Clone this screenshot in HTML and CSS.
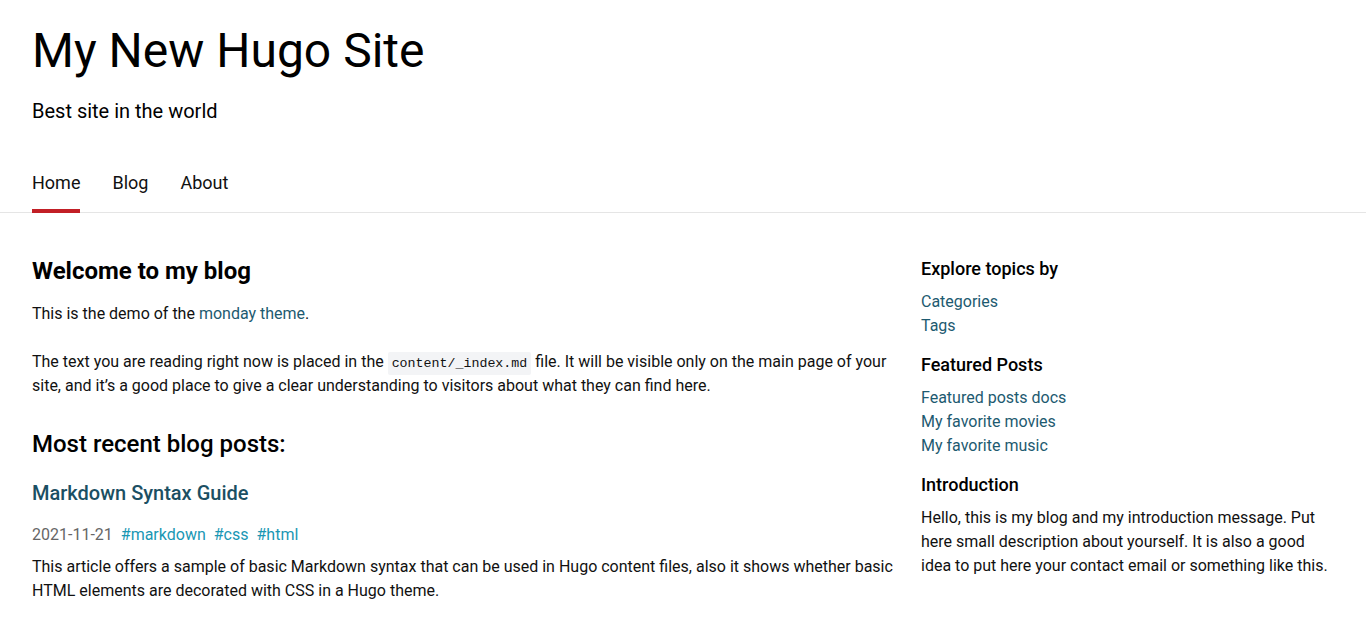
FILE: index.html
```html
<!DOCTYPE html>
<html lang="en">
<head>
<meta charset="utf-8">
<title>My New Hugo Site</title>
<link rel="stylesheet" href="styles.css">
</head>
<body>
<header class="site-header">
  <div class="brand">
    <h1 class="site-title">My New Hugo Site</h1>
    <p class="site-desc">Best site in the world</p>
  </div>
  <nav class="nav">
    <a class="nav-item active" href="#">Home</a>
    <a class="nav-item" href="#">Blog</a>
    <a class="nav-item" href="#">About</a>
  </nav>
</header>
<div class="page">
  <main class="content">
    <h2 class="h2">Welcome to my blog</h2>
    <p class="para">This is the demo of the <a class="link" href="#">monday theme</a>.</p>
    <p class="para">The text you are reading right now is placed in the <code class="code">content/_index.md</code> file. It will be visible only on the main page of your site, and it’s a good place to give a clear understanding to visitors about what they can find here.</p>
    <h2 class="h2 recent">Most recent blog posts:</h2>
    <article class="post">
      <h3 class="post-title"><a class="post-link" href="#">Markdown Syntax Guide</a></h3>
      <div class="meta"><span class="date">2021-11-21</span><a class="tag" href="#">#markdown</a><a class="tag" href="#">#css</a><a class="tag" href="#">#html</a></div>
      <p class="summary">This article offers a sample of basic Markdown syntax that can be used in Hugo content files, also it shows whether basic HTML elements are decorated with CSS in a Hugo theme.</p>
    </article>
  </main>
  <aside class="sidebar">
    <section class="widget">
      <h4 class="widget-title">Explore topics by</h4>
      <ul class="list">
        <li><a class="link" href="#">Categories</a></li>
        <li><a class="link" href="#">Tags</a></li>
      </ul>
    </section>
    <section class="widget">
      <h4 class="widget-title">Featured Posts</h4>
      <ul class="list">
        <li><a class="link" href="#">Featured posts docs</a></li>
        <li><a class="link" href="#">My favorite movies</a></li>
        <li><a class="link" href="#">My favorite music</a></li>
      </ul>
    </section>
    <section class="widget">
      <h4 class="widget-title">Introduction</h4>
      <p class="intro">Hello, this is my blog and my introduction message. Put here small description about yourself. It is also a good idea to put here your contact email or something like this.</p>
    </section>
  </aside>
</div>
</body>
</html>
```
FILE: styles.css
```css
* { box-sizing: border-box; }
html, body { margin: 0; padding: 0; }
body {
  font-family: Roboto, "Liberation Sans", sans-serif;
  color: #111;
  background: #fff;
  font-size: 16px;
  line-height: 1.5;
}
a { text-decoration: none; }

.site-header {
  border-bottom: 1px solid #e5e5e5;
}
.brand {
  padding: 20px 32px 0;
}
.site-title {
  margin: 0;
  font-size: 48px;
  font-weight: 400;
  line-height: 62px;
  color: #000;
}
.site-desc {
  margin: 15px 0 0;
  font-size: 20px;
  line-height: 28px;
  color: #000;
}
.nav {
  display: flex;
  gap: 32px;
  padding: 46px 32px 0;
}
.nav-item {
  display: block;
  color: #111;
  font-size: 18px;
  line-height: 24px;
  padding-bottom: 14px;
  border-bottom: 4px solid transparent;
  margin-bottom: -1px;
}
.nav-item.active {
  border-bottom-color: #c21f26;
}

.page {
  display: grid;
  grid-template-columns: 1fr 413px;
  gap: 20px;
  padding: 0 32px;
}
.content { padding-top: 40px; }
.h2 {
  margin: 0 0 13px;
  font-size: 24px;
  font-weight: 700;
  line-height: 36px;
  color: #000;
}
.h2.recent { margin: 28px 0 16px; font-weight: 500; }
.para {
  margin: 0 0 24px;
  font-size: 16px;
  line-height: 24px;
}
.link { color: #1d5a70; }
.code {
  font-family: "Liberation Mono", "DejaVu Sans Mono", monospace;
  font-size: 13.3px;
  line-height: 17px;
  background: #f3f4f6;
  padding: 4px 4px;
  border-radius: 2px;
}
.post-title {
  margin: 0 0 15px;
  font-size: 20px;
  font-weight: 500;
  line-height: 30px;
}
.post-link { color: #1b4f63; }
.meta {
  display: flex;
  gap: 8px;
  font-size: 16px;
  line-height: 24px;
  margin-bottom: 8px;
}
.date { color: #666; }
.tag { color: #1a97b4; }
.summary {
  margin: 0;
  font-size: 16px;
  line-height: 24px;
}

.sidebar { padding-top: 43px; }
.widget { margin-bottom: 14px; }
.widget-title {
  margin: 0 0 8px;
  font-size: 18px;
  font-weight: 500;
  line-height: 26px;
  color: #000;
}
.list {
  list-style: none;
  margin: 0;
  padding: 0;
  font-size: 16px;
  line-height: 24px;
}
.intro {
  margin: 0;
  font-size: 16px;
  line-height: 24px;
}
```
